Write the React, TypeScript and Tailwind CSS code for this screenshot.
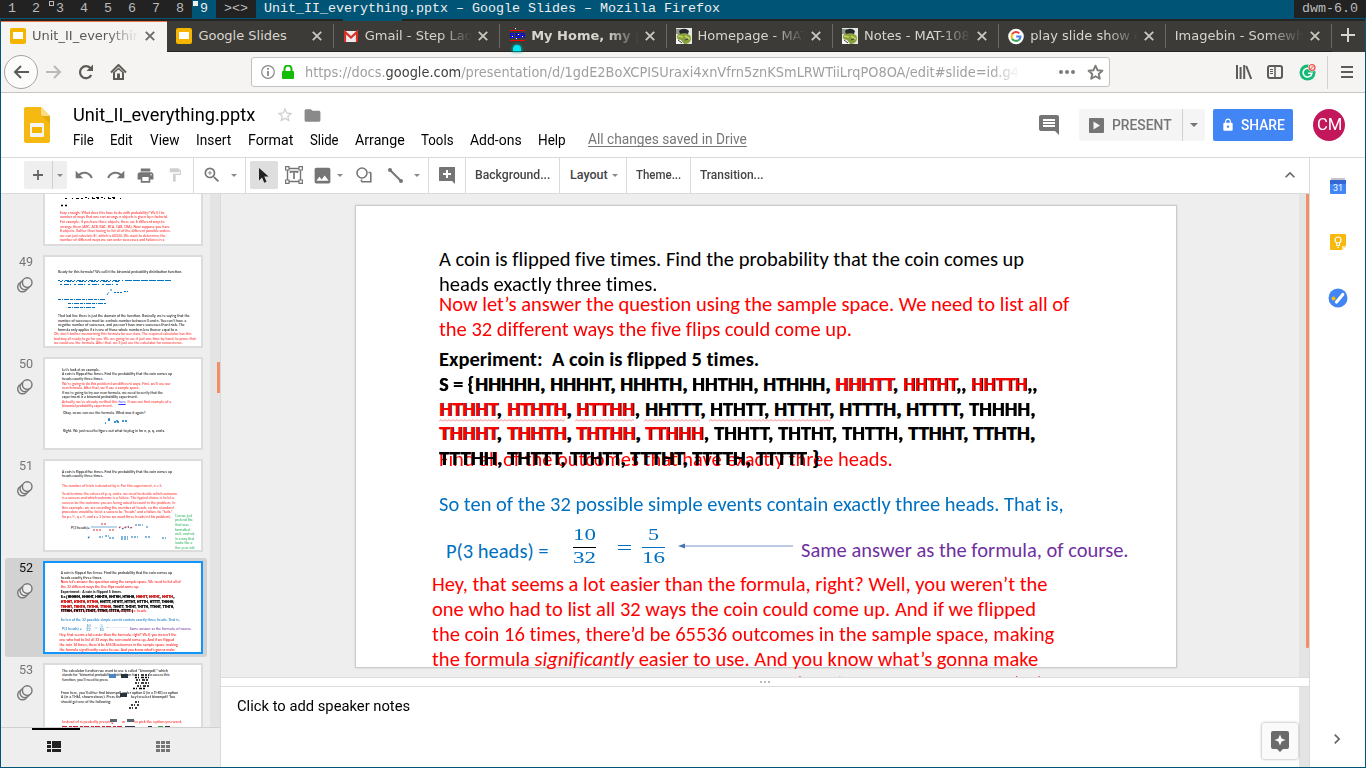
import { useLayoutEffect, useRef, useState, type ReactNode } from "react";
import {
  MdFolder,
  MdFormatPaint,
  MdImage,
  MdInsertComment,
  MdKeyboardArrowUp,
  MdKeyboardArrowRight,
  MdLock,
  MdPrint,
  MdRedo,
  MdStarBorder,
  MdUndo,
  MdZoomIn,
} from "react-icons/md";

type FitProps = { w: number; className?: string; children: ReactNode };

// One line of text, stretched or squeezed to an exact advance width.
function Fit({ w, className = "", children }: FitProps) {
  const ref = useRef<HTMLSpanElement>(null);
  const [scale, setScale] = useState(1);
  useLayoutEffect(() => {
    if (ref.current && ref.current.offsetWidth > 0) setScale(w / ref.current.offsetWidth);
  }, [w]);
  return (
    <span className={`block shrink-0 whitespace-pre ${className}`} style={{ width: w }}>
      <span ref={ref} className="inline-block origin-left align-top" style={{ transform: `scaleX(${scale})` }}>
        {children}
      </span>
    </span>
  );
}

/* ---------- window manager bar ---------- */

const tags = ["1", "2", "3", "4", "5", "6", "7", "8", "9"];

function StatusBar() {
  return (
    <div className="flex h-[18px] bg-[#222222] font-['Liberation_Mono'] text-[13.33px] leading-[17px] text-[#bbbbbb]">
      {tags.map((tag) => (
        <div key={tag} className={`relative w-6 text-center ${tag === "9" ? "bg-[#005577] text-[#eeeeee]" : ""}`}>
          {tag === "3" && <i className="absolute left-px top-px size-[5px] border border-[#bbbbbb]" />}
          {tag === "9" && <i className="absolute left-px top-px size-[5px] bg-[#eeeeee]" />}
          {tag}
        </div>
      ))}
      <div className="w-10 pl-2">{"><>"}</div>
      <div className="flex-1 bg-[#005577] pl-2 text-[#eeeeee]">
        <Fit w={456}>Unit_II_everything.pptx – Google Slides – Mozilla Firefox</Fit>
      </div>
      <div className="w-[72px] pl-2">dwm-6.0</div>
    </div>
  );
}

/* ---------- firefox ---------- */

function SlidesFavicon() {
  return (
    <svg width="16" height="16" viewBox="0 0 16 16">
      <rect width="16" height="16" rx="2" fill="#f4b400" />
      <rect x="3" y="4" width="10" height="7" fill="#fff" />
    </svg>
  );
}

function GmailFavicon() {
  return (
    <svg width="14" height="16" viewBox="0 0 14 16">
      <rect x="0" y="3" width="14" height="11" fill="#eceaea" />
      <path d="M1 14V4l6 5.500 6-5.500v10" fill="none" stroke="#d93025" strokeWidth="2.200" />
    </svg>
  );
}

function HomeFavicon() {
  return (
    <svg width="15" height="16" viewBox="0 0 15 16">
      <path d="M0 2.500h15M0 12.500h15" stroke="#f00" />
      <path d="M0 5.500h4M0 7.500h4M0 9.500h4M5.500 5.500h4M5.500 7.500h4M5.500 9.500h4M11 5.500h3M11 7.500h4" stroke="#00f" strokeWidth="1.200" />
      <path d="M.5 5v3M3.500 7v3M6 5v3M9 7v3M11 5v5M14 5v5" stroke="#00f" />
      <path d="M5 .5h1M2 8.500h1M8 6.500h1M12 8.500h1M6 10.500h1" stroke="#fff" />
    </svg>
  );
}

function GatorFavicon() {
  return (
    <svg width="16" height="16" viewBox="0 0 16 16">
      <rect width="16" height="16" fill="#e6ebe2" />
      <path d="M0 1h5v5H0z" fill="#8b9a8c" />
      <path d="M1 9c0-4 4-5 7-4s7 1 7 5-3 6-7 6-3-3-6-4z" fill="#8aa03c" />
      <path d="M3 3c3-3 7-3 10 0l-1 3c-3-1-6-1-8 0z" fill="#25282c" />
      <path d="M2 8l5 1M9 8l5 3" stroke="#c4d264" strokeWidth="1.500" />
      <path d="M0 11l5 1 3 4H0z" fill="#f7f7f7" />
      <path d="M2 12l4 3M9 12l3-1" stroke="#39444a" />
    </svg>
  );
}

function GoogleFavicon() {
  return (
    <svg width="17" height="17" viewBox="0 0 17 17">
      <circle cx="8.500" cy="8.500" r="8.300" fill="#fff" />
      <g fill="none" strokeWidth="2.200">
        <path d="M12 5.200A4.700 4.700 0 0 0 4.400 6.200" stroke="#ea4335" />
        <path d="M4.400 6.200a4.700 4.700 0 0 0 0 4.600" stroke="#fbbc05" />
        <path d="M4.400 10.800a4.700 4.700 0 0 0 7.300 1.100" stroke="#34a853" />
        <path d="M11.700 11.900a4.700 4.700 0 0 0 1.500-3.400H8.700" stroke="#4285f4" />
      </g>
    </svg>
  );
}

type Tab = { title: string; icon?: ReactNode; bold?: boolean; active?: boolean };

const tabs: Tab[] = [
  { title: "Unit_II_everything.pptx", icon: <SlidesFavicon />, active: true },
  { title: "Google Slides", icon: <SlidesFavicon /> },
  { title: "Gmail - Step Ladder", icon: <GmailFavicon /> },
  { title: "My Home, my page", icon: <HomeFavicon />, bold: true },
  { title: "Homepage - MAT-108", icon: <GatorFavicon /> },
  { title: "Notes - MAT-108-01", icon: <GatorFavicon /> },
  { title: "play slide show on", icon: <GoogleFavicon /> },
  { title: "Imagebin - Somewhere" },
];

function CloseIcon({ color }: { color: string }) {
  return (
    <svg width="10" height="10" viewBox="0 0 10 10" className="shrink-0">
      <path d="M.8.800l8.400 8.400M9.200.800L.8 9.200" stroke={color} strokeWidth="1.900" />
    </svg>
  );
}

function TabStrip() {
  return (
    <div className="relative flex h-[33px] border-t-2 border-[#242422] bg-[#3c3b37]">
      <i className="absolute -top-0.5 left-[342px] h-0.5 w-[59px] bg-[#005577]" />
      {tabs.map((tab, index) => (
        <div
          key={tab.title}
          className={`relative flex w-[166.400px] shrink-0 items-center pl-[9px] ${
            tab.active ? "border-t border-[#e9764b] bg-[#f5f4f2] pb-0.5 text-[#5a5955]" : "border-b border-[#242422] text-[#d8d5ce]"
          }`}
        >
          {tab.icon && <span className="mr-1.5 flex w-4 shrink-0 justify-center">{tab.icon}</span>}
          <span
            className={`flex-1 overflow-hidden whitespace-nowrap font-['DejaVu_Sans'] text-[13px] leading-6 ${
              tab.title === "Google Slides" ? "" : "[mask-image:linear-gradient(to_right,black_70%,transparent_99%)]"
            } ${tab.bold ? "font-bold" : ""}`}
          >
            {tab.title}
          </span>
          <span className="mr-3 flex w-[15px] justify-end">
            <CloseIcon color={tab.active ? "#6c6b68" : "#c9c6c0"} />
          </span>
          {index > 0 && <i className="absolute right-0 top-[3px] h-6 w-px bg-[#6b6965]" />}
          {tab.bold && <i className="absolute bottom-0 left-[13px] h-[6px] w-2 rounded-t-full bg-[#00e8f0] shadow-[0_0_3px_1px_#08979c]" />}
        </div>
      ))}
      <svg width="14" height="14" viewBox="0 0 14 14" className="ml-[9px] mt-[7px]">
        <path d="M7 0v14M0 7h14" stroke="#d8d5ce" strokeWidth="2" />
      </svg>
    </div>
  );
}

function NavBar() {
  return (
    <div className="flex h-[41px] items-center border-b border-[#c8c5c1] bg-[#f5f4f2] pl-[3px]">
      <span className="grid size-[34px] place-items-center rounded-full border border-[#a5a4a1] bg-[#fcfcfb]">
        <svg width="16" height="14" viewBox="0 0 16 14" fill="none" stroke="#5c5b57" strokeWidth="2">
          <path d="M16 7H2M8 1L2 7l6 6" />
        </svg>
      </span>
      <svg width="16" height="14" viewBox="0 0 16 14" fill="none" stroke="#bbb9b6" strokeWidth="2" className="ml-2">
        <path d="M0 7h14M8 1l6 6-6 6" />
      </svg>
      <svg width="16" height="16" viewBox="0 0 16 16" fill="none" stroke="#5c5b57" strokeWidth="2.200" className="ml-4">
        <path d="M12.500 4.200A6 6 0 1 0 13.300 11" />
        <path d="M15 .5v6.500H8.500z" fill="#5c5b57" stroke="none" />
      </svg>
      <svg width="17" height="16" viewBox="0 0 17 16" className="ml-4">
        <path d="M1 8.500L8.500 1 16 8.500" fill="none" stroke="#5c5b57" strokeWidth="2" />
        <path d="M3 8.500L8.500 3.500 14 8.500V16H3z" fill="#5c5b57" />
        <path d="M5 8.500L8.500 5.500 12 8.500V14H10V9.500H7V14H5z" fill="#f5f4f2" />
      </svg>
      <div className="ml-[124px] flex h-[30px] w-[859px] items-center rounded-[3px] border border-[#c4c2be] bg-white pl-[9px]">
        <svg width="14" height="14" viewBox="0 0 14 14" fill="none" stroke="#8a8986">
          <circle cx="7" cy="7" r="6.300" strokeWidth="1.200" />
          <path d="M7 6v5M7 3v1.800" strokeWidth="1.800" />
        </svg>
        <svg width="12" height="14" viewBox="0 0 12 14" className="ml-[7px]">
          <rect y="6" width="12" height="8" rx="1" fill="#12bc00" />
          <path d="M2.500 7V4a3.500 3.500 0 0 1 7 0v3" fill="none" stroke="#12bc00" strokeWidth="2" />
        </svg>
        <div className="ml-[11px] w-[722px] overflow-hidden pt-px font-['DejaVu_Sans'] text-[13.33px] leading-6 text-[#a09f9d] [mask-image:linear-gradient(to_right,black_95%,transparent_99%)]">
          <Fit w={722}>
            https://docs.<span className="text-[#3f3e3b]">google.com</span>
            /presentation/d/1gdE2BoXCPISUraxi4xnVfrn5znKSmLRWTiiLrqPO8OA/edit#slide=id.g45
          </Fit>
        </div>
        <svg width="16" height="4" viewBox="0 0 16 4" className="ml-8" fill="#7d7c79">
          <circle cx="2" cy="2" r="2" />
          <circle cx="8" cy="2" r="2" />
          <circle cx="14" cy="2" r="2" />
        </svg>
        <svg width="17" height="17" viewBox="0 0 17 17" className="ml-3">
          <path d="M8.500 1.700l2 4.500 4.900.5-3.700 3.300 1.100 4.800-4.300-2.500-4.300 2.500L5.300 10 1.600 6.700l4.900-.5z" fill="none" stroke="#7d7c79" strokeWidth="1.900" strokeLinejoin="round" />
        </svg>
      </div>
      <svg width="16" height="14" viewBox="0 0 16 14" className="ml-[126px]" stroke="#5c5b57" strokeWidth="2">
        <path d="M1 0v14M4.600 2v12M8.200 0v14" />
        <path d="M10.200 1l5 13" />
      </svg>
      <svg width="16" height="14" viewBox="0 0 16 14" className="ml-[15px]" fill="none" stroke="#5c5b57">
        <rect x="1" y="1" width="14" height="12" rx="2" strokeWidth="2" />
        <path d="M8 1v12" strokeWidth="1.500" />
        <path d="M3 4.500h3M3 6.500h3M3 8.500h3" />
      </svg>
      <svg width="18" height="18" viewBox="0 0 18 18" className="ml-4">
        <circle cx="8.500" cy="9.500" r="8" fill="#15ba77" />
        <path d="M11.700 6.500A4.400 4.400 0 1 0 12.900 10.300H9" fill="none" stroke="#fff" strokeWidth="1.600" />
        <circle cx="13" cy="4.500" r="4" fill="#fff" />
        <circle cx="13" cy="4.500" r="3" fill="#fbdcd9" stroke="#ea4f45" strokeWidth="1.200" />
        <path d="M11 6.500l4-4" stroke="#ea4f45" />
      </svg>
      <i className="ml-[10px] h-[33px] w-px bg-[#d3d1cd]" />
      <svg width="12" height="12" viewBox="0 0 12 12" className="ml-[13px]">
        <path d="M0 1h12M0 6h12M0 11h12" stroke="#5c5b57" strokeWidth="2" />
      </svg>
    </div>
  );
}

/* ---------- slides header ---------- */

const menuItems: { label: string; w: number; cell: string }[] = [
  { label: "File", w: 21, cell: "w-[37px]" },
  { label: "Edit", w: 23, cell: "w-[40px]" },
  { label: "View", w: 29, cell: "w-[46px]" },
  { label: "Insert", w: 35, cell: "w-[52px]" },
  { label: "Format", w: 45, cell: "w-[62px]" },
  { label: "Slide", w: 29, cell: "w-[45px]" },
  { label: "Arrange", w: 50, cell: "w-[66px]" },
  { label: "Tools", w: 33, cell: "w-[49px]" },
  { label: "Add-ons", w: 52, cell: "w-[68px]" },
  { label: "Help", w: 28, cell: "w-[50px]" },
];

function Header() {
  return (
    <div className="flex h-[65px] border-b border-[#dadada] bg-white">
      <svg width="26" height="36" viewBox="0 0 26 36" className="ml-[23px] mt-[14px] shrink-0">
        <path d="M2 0h15l9 9v25a2 2 0 0 1-2 2H2a2 2 0 0 1-2-2V2a2 2 0 0 1 2-2z" fill="#f5b912" />
        <path d="M17 0l9 9h-7a2 2 0 0 1-2-2z" fill="#fadc87" />
        <path d="M18 9h8v8z" fill="#dca30c" opacity=".6" />
        <rect x="6" y="16" width="14" height="14" rx="1" fill="#f4f4f4" />
        <rect x="8" y="20" width="10" height="6" fill="#f4b400" />
      </svg>
      <div className="ml-[23px] flex-1 font-['Roboto'] text-black">
        <div className="mt-[9px] flex h-[26px] items-center">
          <Fit w={182} className="text-[18px] leading-[26px]">Unit_II_everything.pptx</Fit>
          <MdStarBorder className="ml-[21px] size-[18px] text-[#cccccc]" />
          <MdFolder className="ml-[9px] size-[19px] text-[#8a8a8a]" />
        </div>
        <div className="mt-px flex h-6 items-center text-[14.500px] leading-6">
          {menuItems.map((item) => (
            <div key={item.label} className={item.cell}>
              <Fit w={item.w}>{item.label}</Fit>
            </div>
          ))}
          <Fit w={159} className="-mt-0.5 text-[#777777]">
            <span className="underline decoration-1 underline-offset-[2px] [text-decoration-skip-ink:none]">All changes saved in Drive</span>
          </Fit>
        </div>
      </div>
      <MdInsertComment className="mt-[20px] size-6 text-[#757575]" />
      <div className="ml-[18px] mt-4 flex h-8 w-[126px] items-center rounded-[2px] bg-[#f5f5f5] font-['Roboto'] text-[#757575]">
        <svg width="15" height="15" viewBox="0 0 15 15" className="ml-[10px]">
          <rect width="15" height="15" rx="1" fill="#757575" />
          <path d="M4.500 3.500v8L11 7.500z" fill="#f5f5f5" />
        </svg>
        <Fit w={60} className="ml-2 text-[15px] font-medium leading-8">PRESENT</Fit>
        <i className="ml-[10px] h-8 w-px bg-[#d0d0d0]" />
        <span className="ml-[7px] border-x-4 border-t-4 border-transparent border-t-[#757575]" />
      </div>
      <div className="ml-2 mt-4 flex h-8 w-20 items-center rounded-[2px] bg-[#4285f4] font-['Roboto'] text-white">
        <MdLock className="ml-2 size-[14px]" />
        <Fit w={44} className="ml-[6px] text-[15px] font-medium leading-8">SHARE</Fit>
      </div>
      <div className="ml-5 mr-5 mt-4 flex size-8 items-center justify-center rounded-full bg-[#c2185b] font-['Roboto'] text-white">
        <Fit w={25} className="text-[16px] leading-8">CM</Fit>
      </div>
    </div>
  );
}

function Sep() {
  return <i className="h-full w-px shrink-0 bg-[#dadada]" />;
}

function Caret() {
  return <span className="block border-x-[3px] border-t-[3.500px] border-transparent border-t-[#8a8a8a]" />;
}

function Cell({ className, children }: { className: string; children?: ReactNode }) {
  return <div className={`grid shrink-0 place-items-center ${className}`}>{children}</div>;
}

function Toolbar() {
  return (
    <div className="flex h-9 items-center border-b border-[#dadada] bg-white pl-[23px] font-['Roboto'] text-[12.500px] font-medium leading-[26px] text-[#444444]">
      <Cell className="-mt-px h-7 w-[28px] rounded-l-[2px] bg-[#efefef]">
        <svg width="10" height="10" viewBox="0 0 10 10"><path d="M5 0v10M0 5h10" stroke="#666" strokeWidth="1.800" /></svg>
      </Cell>
      <Cell className="-mt-px h-7 w-[15px] rounded-r-[2px] border-l border-[#d0d0d0] bg-[#efefef]"><Caret /></Cell>
      <Cell className="-mt-0.5 w-[34px]"><MdUndo className="size-5 text-[#757575]" /></Cell>
      <Cell className="-mt-0.5 w-[29px]"><MdRedo className="size-5 text-[#757575]" /></Cell>
      <Cell className="-mt-px w-[30px]"><MdPrint className="size-[19px] text-[#757575]" /></Cell>
      <Cell className="-mt-px w-[30px]"><MdFormatPaint className="size-4 text-[#cfcfcf]" /></Cell>
      <Cell className="w-[3px]" />
      <Sep />
      <Cell className="-mt-0.5 w-9"><MdZoomIn className="size-[20px] text-[#757575]" /></Cell>
      <Cell className="-mt-px w-[7px]"><Caret /></Cell>
      <Cell className="w-2" />
      <Sep />
      <Cell className="-mt-px ml-1 h-7 w-7 rounded-[2px] bg-[#dedede]">
        <svg width="10" height="15" viewBox="0 0 10 15"><path d="M0 0v12.500l3-3 2.300 5.300 2.200-1L5.300 8.600H9.600z" fill="#222" /></svg>
      </Cell>
      <Cell className="-mt-px w-8">
        <svg width="18" height="18" viewBox="0 0 18 18" fill="none" stroke="#757575">
          <path d="M2.500 2.500h13v13h-13z" strokeWidth="1.400" />
          <path d="M5.500 7V5.700h7V7M9 5.700v7.300" strokeWidth="1.700" />
          <g fill="#fff" strokeWidth="1.200">
            <path d="M.6.600h3.400v3.400H.6zM14 .6h3.400v3.400H14zM.6 14h3.400v3.400H.6zM14 14h3.400v3.400H14z" />
          </g>
        </svg>
      </Cell>
      <Cell className="-mt-px w-6"><MdImage className="size-[21px] text-[#757575]" /></Cell>
      <Cell className="-mt-px w-3"><Caret /></Cell>
      <Cell className="-mt-px w-9">
        <svg width="16" height="16" viewBox="0 0 16 16" fill="none" stroke="#757575" strokeWidth="1.600">
          <circle cx="6" cy="6" r="5" />
          <path d="M14.800 5.500v9.300H5.500M12.500 5.500h2.300M5.500 12.500v2.300" />
        </svg>
      </Cell>
      <Cell className="-mt-px w-[26px]">
        <svg width="15" height="15" viewBox="0 0 15 15">
          <path d="M2 2l11 11" stroke="#757575" strokeWidth="2" />
          <circle cx="2" cy="2" r="2" fill="#757575" />
          <circle cx="13" cy="13" r="2" fill="#757575" />
        </svg>
      </Cell>
      <Cell className="-mt-px w-[17px]"><Caret /></Cell>
      <Cell className="w-[3px]" />
      <Sep />
      <Cell className="w-9">
        <svg width="16" height="17" viewBox="0 0 16 17">
          <path d="M1 0h15v17l-3-3H0V1a1 1 0 0 1 1-1z" fill="#757575" />
          <path d="M8 3v8M4 7h8" stroke="#fff" strokeWidth="2" />
        </svg>
      </Cell>
      <Sep />
      <Fit w={75} className="mx-[9px] pb-0.5">Background...</Fit>
      <Sep />
      <Fit w={38} className="ml-[10px] mr-[4px] pb-0.5">Layout</Fit>
      <Caret />
      <i className="w-2" />
      <Sep />
      <Fit w={45} className="mx-[9px] pb-0.5">Theme...</Fit>
      <Sep />
      <Fit w={64} className="ml-[9px] pb-0.5">Transition...</Fit>
      <MdKeyboardArrowUp className="-mt-0.5 ml-auto mr-[9px] size-5 text-[#666666]" />
    </div>
  );
}

/* ---------- slide ---------- */

type Token = { text: string; pitch: number; red?: boolean };

const outcomeRows: Token[][] = [
  [
    { text: "S = {", pitch: 36 },
    { text: "HHHHH,", pitch: 75 },
    { text: "HHHHT,", pitch: 70 },
    { text: "HHHTH,", pitch: 72 },
    { text: "HHTHH,", pitch: 71 },
    { text: "HTHHH,", pitch: 72 },
    { text: "HHHTT,", pitch: 68, red: true },
    { text: "HHTHT,,", pitch: 68, red: true },
    { text: "HHTTH,,", pitch: 71, red: true },
  ],
  [
    { text: "HTHHT,", pitch: 68, red: true },
    { text: "HTHTH,", pitch: 69, red: true },
    { text: "HTTHH,", pitch: 69, red: true },
    { text: "HHTTT,", pitch: 65 },
    { text: "HTHTT,", pitch: 64 },
    { text: "HTTHT,", pitch: 65 },
    { text: "HTTTH,", pitch: 67 },
    { text: "HTTTT,", pitch: 63 },
    { text: "THHHH,", pitch: 71 },
  ],
  [
    { text: "THHHT,", pitch: 68, red: true },
    { text: "THHTH,", pitch: 69, red: true },
    { text: "THTHH,", pitch: 69, red: true },
    { text: "TTHHH,", pitch: 69, red: true },
    { text: "THHTT,", pitch: 64 },
    { text: "THTHT,", pitch: 64 },
    { text: "THTTH,", pitch: 66 },
    { text: "TTHHT,", pitch: 65 },
    { text: "TTHTH,", pitch: 67 },
  ],
  [
    { text: "TTTHH,", pitch: 68 },
    { text: "THTTT,", pitch: 63 },
    { text: "TTHTT,", pitch: 60 },
    { text: "TTTHT,", pitch: 62 },
    { text: "TTTTH,", pitch: 64 },
    { text: "TTTTT", pitch: 56 },
    { text: "}", pitch: 12 },
  ],
];

function OutcomeRow({ row }: { row: Token[] }) {
  return (
    <div className="flex">
      {row.map((token) => {
        const letters = token.text.replace(/,/g, "");
        const gap = token.text.startsWith("S") ? 1 : 5;
        return (
          <div key={token.text} className="shrink-0" style={{ width: token.pitch }}>
            <Fit w={token.pitch - gap}>
              <span className={token.red ? "text-[#ff0000] [text-shadow:1px_0_0_#400]" : "[text-shadow:0.500px_0_0_#000]"}>{letters}</span>
              <span className="[text-shadow:0.800px_0_0_#000]">{token.text.slice(letters.length)}</span>
            </Fit>
          </div>
        );
      })}
    </div>
  );
}

function Squiggle({ className }: { className: string }) {
  return (
    <svg height="3" className={`absolute top-[213px] ${className}`}>
      <defs>
        <pattern id="squiggle" width="4" height="3" patternUnits="userSpaceOnUse">
          <path d="M0 2.500l2-2 2 2" fill="none" stroke="#ff6060" strokeWidth=".8" />
        </pattern>
      </defs>
      <rect width="100%" height="3" fill="url(#squiggle)" />
    </svg>
  );
}

function SlideContent() {
  return (
    <div className="relative h-[461px] w-[820px] font-['Carlito','Lato'] text-[20.500px] leading-[25px] text-black [font-variant-ligatures:none]">
      <div className="absolute left-[83px] top-[41px]">
        <Fit w={585}>A coin is flipped five times. Find the probability that the coin comes up</Fit>
        <Fit w={218}>heads exactly three times.</Fit>
      </div>
      <div className="absolute left-[83px] top-[86px] text-[#ff0000]">
        <Fit w={630}>Now let’s answer the question using the sample space. We need to list all of</Fit>
        <Fit w={413}>the 32 different ways the five flips could come up.</Fit>
      </div>
      <Fit w={454} className="absolute left-[83px] top-[240.500px] text-[#ff0000]">
        Find all of the outcomes that have exactly three heads.
      </Fit>
      <div className="absolute left-[83px] top-[141px] font-bold leading-[24.800px]">
        <Fit w={320}>{"Experiment:  A coin is flipped 5 times."}</Fit>
        {outcomeRows.map((row) => (
          <OutcomeRow key={row[0].text} row={row} />
        ))}
      </div>
      <Squiggle className="left-[83px] w-[126px]" />
      <Squiggle className="left-[219px] w-[59px]" />
      <Squiggle className="left-[288px] w-[56px]" />
      <Squiggle className="left-[353px] w-[122px]" />
      <Fit w={625} className="absolute left-[83px] top-[286px] text-[#0070c0]">
        So ten of the 32 possible simple events contain exactly three heads. That is,
      </Fit>
      <Fit w={102} className="absolute left-[90px] top-[333px] text-[#0070c0]">P(3 heads) =</Fit>
      <div className="absolute left-[217px] top-[319px] font-['Liberation_Serif'] text-[16px] leading-[20px] text-[#0070c0]">
        <Fit w={23} className="h-[22.500px] border-b border-black">10</Fit>
        <Fit w={23}>32</Fit>
      </div>
      <i className="absolute left-[262px] top-[339px] h-[5px] w-[13px] border-y border-[#0070c0]" />
      <div className="absolute left-[286px] top-[319px] font-['Liberation_Serif'] text-[16px] leading-[20px] text-[#0070c0]">
        <div className="flex h-[22.500px] w-[23px] justify-center border-b border-[#0070c0]">
          <Fit w={11}>5</Fit>
        </div>
        <Fit w={23}>16</Fit>
      </div>
      <svg width="116" height="6" viewBox="0 0 116 6" className="absolute left-[322px] top-[337px]">
        <path d="M4 3h111" stroke="#a3b8df" strokeWidth="1.600" />
        <path d="M0 3l7-2.500v5z" fill="#4a72b5" />
      </svg>
      <Fit w={328} className="absolute left-[445px] top-[332px] text-[#7030a0]">Same answer as the formula, of course.</Fit>
      <div className="absolute left-[76px] top-[366px] text-[#ff0000]">
        <Fit w={616}>Hey, that seems a lot easier than the formula, right? Well, you weren’t the</Fit>
        <Fit w={604}>one who had to list all 32 ways the coin could come up. And if we flipped</Fit>
        <Fit w={622}>the coin 16 times, there’d be 65536 outcomes in the sample space, making</Fit>
        <Fit w={606}>
          the formula <span className="italic">significantly</span> easier to use. And you know what’s gonna make
        </Fit>
        <Fit w={617}>the probability functions even more awesome? (Didn’t I do this by the TI-83 (84)!</Fit>
      </div>
    </div>
  );
}

/* ---------- filmstrip ---------- */

type Line = [text: string, width: number];

function Lines({ className, lines }: { className: string; lines: Line[] }) {
  return (
    <div className={`absolute font-['Carlito','Lato'] text-[3.900px] leading-[4.600px] ${className}`}>
      {lines.map(([text, width]) => (
        <Fit key={text} w={width}>{text}</Fit>
      ))}
    </div>
  );
}

function Slide48() {
  return (
    <>
      <svg width="156" height="60" className="absolute left-0 top-0" stroke="#000" fill="none">
        <path d="M20 43.500h56M40 42.500h30" strokeDasharray="2 5 1 3 3 2" />
        <path d="M16 50.500h2M20 50.500h2" strokeWidth="1.500" />
      </svg>
      <Lines
        className="left-[15px] top-[55.900px] text-[#ff2020]"
        lines={[
          ["Easy enough. What does this have to do with probability? Well, the", 105],
          ["number of ways that one can arrange n objects is given by n factorial.", 108],
          ["For example, if you have three objects, there are 6 different ways to", 105],
          ["arrange them (ABC, ACB, BAC, BCA, CAB, CBA). Now suppose you have", 110],
          ["8 objects. Rather than having to list all of the different possible orders,", 111],
          ["we can just calculate 8!, which is 40320. We want to determine the", 106],
          ["number of different ways we can order successes and failures in a", 104],
        ]}
      />
    </>
  );
}

function Slide49() {
  return (
    <>
      <Lines className="left-[13px] top-[12.900px]" lines={[["Ready for this formula? We call it the binomial probability distribution function.", 124]]} />
      <svg width="156" height="60" className="absolute left-0 top-0" stroke="#0070c0" fill="none">
        <path d="M13 23.500h70M15 24.500h60" strokeDasharray="2 2 1 2 4 1" />
        <path d="M80 23.500h46" strokeDasharray="7 1" />
        <path d="M15 27.500h58" strokeDasharray="2 2 5 1 1 3" />
        <path d="M62 38l2-3M65 33h3M69 35.500h8M79 34.500h4" strokeDasharray="2 1" />
        <path d="M13 42.500h48M23 46.500h38M23 50.500h28" strokeDasharray="3 1 1 1 5 1" />
      </svg>
      <Lines
        className="left-[13px] top-[57.200px]"
        lines={[
          ["That last line there is just the domain of the function. Basically, we’re saying that the", 132],
          ["number of successes must be a whole number between 0 and n. You can’t have a", 128],
          ["negative number of successes, and you can’t have more successes than trials. The", 127],
          ["formula only applies if x is one of those whole numbers less than or equal to n.", 120],
        ]}
      />
      <Lines
        className="left-[9px] top-[75.200px] text-[#ff2020]"
        lines={[
          ["Oh, don’t bother memorizing this formula for our class. The required calculator has this", 138],
          ["bad boy all ready to go for you. We are going to use it just one time by hand, to prove that", 142],
          ["we could use the formula. After that, we’ll just use the calculator for convenience.", 129],
        ]}
      />
    </>
  );
}

function Slide50() {
  return (
    <>
      <Lines
        className="left-[17px] top-[8.900px]"
        lines={[
          ["Let’s look at an example.", 38],
          ["A coin is flipped five times. Find the probability that the coin comes up", 110],
          ["heads exactly three times.", 41],
        ]}
      />
      <Lines
        className="left-[17px] top-[22.700px] text-[#ff2020]"
        lines={[
          ["We’re going to do this problem two different ways. First, we’ll use our", 109],
          ["new formula. After that, we’ll use a sample space.", 78],
        ]}
      />
      <Lines
        className="left-[17px] top-[31.500px]"
        lines={[
          ["If we’re going to try our new formula, we need to verify that the", 101],
          ["experiment is a binomial probability experiment.", 76],
        ]}
      />
      <div className="absolute left-[17px] top-[40.900px] font-['Carlito','Lato'] text-[3.900px] leading-[4.600px] text-[#ff2020]">
        <Fit w={109}>
          Actually, we’ve already verified this <span className="text-[#3030ff] underline">here</span>. It was our first example of a
        </Fit>
        <Fit w={51}>binomial probability experiment.</Fit>
      </div>
      <Lines className="left-[18px] top-[51.900px]" lines={[["Okay, so we can use the formula. What was it again?", 82]]} />
      <svg width="156" height="70" className="absolute left-0 top-0" stroke="#0070c0" fill="none">
        <path d="M60 64h1M63 61h2M64 59v2M69 63h6M77 62h5M72 61v3" strokeDasharray="2 1" strokeWidth="1.300" />
      </svg>
      <Lines className="left-[18px] top-[69.900px]" lines={[["Right. We just need to figure out what to plug in for n, p, q, and x.", 102]]} />
    </>
  );
}

function Slide51() {
  return (
    <>
      <Lines
        className="left-[17px] top-[8.900px]"
        lines={[
          ["A coin is flipped five times. Find the probability that the coin comes up", 110],
          ["heads exactly three times.", 41],
        ]}
      />
      <Lines className="left-[17px] top-[22.500px] text-[#ff2020]" lines={[["The number of trials is denoted by n. For this experiment, n = 5.", 100]]} />
      <Lines
        className="left-[17px] top-[30.900px] text-[#ff2020]"
        lines={[
          ["To determine the values of p, q, and x, we need to decide which outcome", 115],
          ["is a success and which outcome is a failure. The typical choice is to let a", 112],
          ["success be the outcome you are being asked to count in the problem. In", 113],
          ["this example, we are counting the number of heads, so the standard", 111],
          ["procedure would be to let a success be “heads” and a failure be “tails.”", 110],
          ["So p = ½, q = ½, and x = 3 (since we want three heads in this problem).", 109],
        ]}
      />
      <Lines className="left-[26px] top-[64.900px]" lines={[["P(3 heads)=", 19]]} />
      <svg width="156" height="89" className="absolute left-0 top-0" fill="none" strokeWidth="1.200">
        <path d="M46 66h26" stroke="#8dbce0" />
        <path d="M56 63h6M48 69h8M64 69h5M74 67l2-2M80 67l2-2M85 67l3-1" stroke="#e03030" strokeDasharray="2 1" />
        <path d="M77 68l3-2M83 65l1 3M90 64h4M94 64h4M101 66h2" stroke="#3d6eb8" strokeDasharray="2 1" />
        <path d="M43 77l2-2M54 76h4M60 75h4M64 77h6M76 76h7M76 78h7M86 76h7M100 76h6M117 77h4" stroke="#0070c0" strokeDasharray="2 1" />
      </svg>
      <Lines
        className="left-[130px] top-[52.900px] text-[#21b35b]"
        lines={[
          ["Can we just", 17],
          ["pretend like", 18],
          ["that was", 13],
          ["formatted", 15],
          ["well, and not", 20],
          ["in a way that", 19],
          ["looks like a", 17],
          ["five year old", 19],
        ]}
      />
    </>
  );
}

function Slide53() {
  return (
    <>
      <Lines
        className="left-[17px] top-[3.900px]"
        lines={[
          ["The calculator function we want to use is called “binompdf,” which", 106],
          ["stands for “binomial probability distribution function.” To access this", 108],
          ["function, you’ll need to press", 46],
        ]}
      />
      <Lines
        className="left-[16px] top-[25.900px]"
        lines={[
          ["From here, you’ll either find binompdf under option 0 (in a TI-83) or option", 117],
          ["A (in a TI-84, shown above). Press the           key to select binompdf. You", 114],
          ["should get one of the following:", 50],
        ]}
      />
      <Lines className="left-[17px] top-[54.900px] text-[#ff2020]" lines={[["Instead of repeatedly pressing         or         to pick the option you want,", 120]]} />
      <svg width="156" height="70" className="absolute left-0 top-0">
        <path d="M64 9h7v4h-7z" fill="#4a86c5" />
        <path d="M76 9h7v4h-7zM75 28h7v4h-7z" fill="#26323c" />
        <path d="M90 8h14v16H90z" fill="#fff" />
        <path d="M90 10h14M90 12.500h14M91 15h13M90 18h14M92 21h12M88 23.500h12" stroke="#000" strokeWidth="1.600" strokeDasharray="2 1 1 2 3 1" />
        <path d="M90 37h5M86 40h8M84 43h8" stroke="#000" strokeWidth="1.300" strokeDasharray="2 1 1 2" />
        <path d="M65 54h7v3h-7zM82 54h7v3h-7z" fill="#56666e" />
        <path d="M17 61.500h60" stroke="#d02040" strokeDasharray="5 2 3 1" />
        <path d="M80 61.500h10M103 61.500h4M120 61.500h5" stroke="#33344a" />
        <path d="M113 61.500h5" stroke="#2da44e" />
      </svg>
    </>
  );
}

const thumbs: { number: number; content: ReactNode; selected?: boolean }[] = [
  { number: 48, content: <Slide48 /> },
  { number: 49, content: <Slide49 /> },
  { number: 50, content: <Slide50 /> },
  { number: 51, content: <Slide51 /> },
  { number: 52, content: <div className="origin-top-left scale-[0.19024]"><SlideContent /></div>, selected: true },
  { number: 53, content: <Slide53 /> },
];

function Filmstrip() {
  return (
    <div className="flex w-[220px] shrink-0 flex-col border-r border-[#dadada] bg-[#eeeeee]">
      <div className="flex h-[533px] overflow-hidden">
        <div className="-mt-[44px] w-[209px] shrink-0 pl-1">
          {thumbs.map((thumb) => (
            <div
              key={thumb.number}
              className={`mb-[3px] flex h-[99px] w-[202px] rounded-[3px] pt-[3px] ${thumb.selected ? "bg-[#d2d2d2]" : ""}`}
            >
              <div className="flex w-[38px] shrink-0 flex-col items-center font-['Roboto'] text-[13.500px] leading-[13px] text-[#757575]">
                <Fit w={14} className={`ml-[3px] ${thumb.selected ? "text-[#111111]" : ""}`}>{thumb.number}</Fit>
                <svg width="16" height="16" viewBox="0 0 16 16" fill="#eee" stroke="#757575" strokeWidth="1.400" className="ml-px mt-[9px]">
                  <circle cx="5.500" cy="10" r="4.800" />
                  <circle cx="7.800" cy="7.800" r="4.800" />
                  <circle cx="10.200" cy="5.600" r="4.800" />
                </svg>
              </div>
              <div className={`relative h-[93px] w-40 shrink-0 overflow-hidden border-2 bg-white ${thumb.selected ? "border-[#0f95fb]" : "border-[#dcdcdc]"}`}>
                {thumb.content}
              </div>
            </div>
          ))}
        </div>
        <div className="h-full flex-1 bg-[#e4e4e4] pl-[7px] pt-[168px]">
          <div className="h-[31px] bg-[#f28e69]" />
        </div>
      </div>
      <div className="flex flex-1 items-start border-t border-[#d0d0d0]">
        <div className="ml-[31px] h-full w-12 border-t-2 border-black pl-[15px] pt-[11px]">
          <svg width="14" height="11" viewBox="0 0 14 11" fill="#222">
            <path d="M0 0h4v3H0zM0 4h4v3H0zM0 8h4v3H0zM5 0h9v7H5zM5 8h9v3H5z" />
          </svg>
        </div>
        <svg width="14" height="11" viewBox="0 0 14 11" fill="#757575" className="ml-[76px] mt-[13px]">
          <path d="M0 0h4v3H0zM0 4h4v3H0zM0 8h4v3H0zM5 0h4v3H5zM5 4h4v3H5zM5 8h4v3H5zM10 0h4v3h-4zM10 4h4v3h-4zM10 8h4v3h-4z" />
        </svg>
      </div>
    </div>
  );
}

/* ---------- workspace ---------- */

function Workspace() {
  return (
    <div className="flex min-w-0 flex-1 flex-col">
      <div className="flex h-[483px] shrink-0 overflow-hidden bg-[#eeeeee]">
        <div className="w-[1078px] pl-[134px] pt-[11px]">
          <div className="box-content h-[461px] w-[820px] border border-[#cccccc] bg-white shadow-[0_0_2px_rgba(0,0,0,0.15)]">
            <SlideContent />
          </div>
        </div>
        <div className="h-full flex-1 bg-[#e4e4e4] pl-[7px]">
          <div className="h-[454px] rounded-b-[1px] bg-[#f28e69]" />
        </div>
      </div>
      <div className="flex h-[10px] shrink-0 items-center justify-center gap-[2px] border-y border-[#dddddd] bg-white">
        <i className="size-0.5 bg-[#bbbbbb]" />
        <i className="size-0.5 bg-[#bbbbbb]" />
        <i className="size-0.5 bg-[#bbbbbb]" />
      </div>
      <div className="flex flex-1 bg-white">
        <div className="relative w-[1078px] pl-4 pt-[9px] font-['Roboto'] text-[14.500px] leading-[22px] text-black">
          <Fit w={173}>Click to add speaker notes</Fit>
          <div className="absolute bottom-[8px] right-px grid size-9 place-items-center rounded-[2px] bg-[#fafafa] shadow-[0_0_3px_rgba(0,0,0,0.4)]">
            <svg width="18" height="21" viewBox="0 0 18 21">
              <path d="M2 0h14a2 2 0 0 1 2 2v14a2 2 0 0 1-2 2h-4l-3 3-3-3H2a2 2 0 0 1-2-2V2a2 2 0 0 1 2-2z" fill="#6b6b6b" />
              <path d="M9 3.500l1.600 3.900L14.500 9l-3.900 1.600L9 14.500l-1.600-3.900L3.500 9l3.900-1.600z" fill="#fff" />
            </svg>
          </div>
        </div>
        <div className="flex-1 bg-[#e4e4e4]" />
      </div>
    </div>
  );
}

function SidePanel() {
  return (
    <div className="flex w-[56px] shrink-0 flex-col items-center border-l border-[#dadada] bg-white pl-px pt-5">
      <svg width="16" height="16" viewBox="0 0 16 16">
        <rect x="1" width="14" height="4" rx="1" fill="#c4c4c8" />
        <rect y="2" width="16" height="14" rx="1" fill="#4285f4" />
        <rect y="2" width="16" height="4" fill="#3367d6" />
        <text x="8" y="12.700" textAnchor="middle" fill="#fff" className="font-['Roboto'] text-[9px]">31</text>
      </svg>
      <svg width="16" height="16" viewBox="0 0 16 16" className="mt-10">
        <path d="M1 0h14a1 1 0 0 1 1 1v11l-4 4H1a1 1 0 0 1-1-1V1a1 1 0 0 1 1-1z" fill="#f7b90d" />
        <path d="M12 16v-4h4z" fill="#fde9a9" />
        <circle cx="8" cy="6" r="3" fill="none" stroke="#fff" strokeWidth="1.200" />
        <path d="M6.500 9v2.500h3V9M7 13.200h2" fill="none" stroke="#fff" />
      </svg>
      <svg width="20" height="20" viewBox="0 0 20 20" className="mt-[38px]">
        <circle cx="10" cy="10" r="9.500" fill="#4285f4" />
        <circle cx="5.500" cy="10.500" r="2" fill="#fbbc04" />
        <path d="M8.500 14l6.300-7.500" stroke="#fff" strokeWidth="3.200" strokeLinecap="round" />
      </svg>
      <MdKeyboardArrowRight className="mb-[18px] mr-0.5 mt-auto size-5 text-[#666666]" />
    </div>
  );
}

export default function App() {
  return (
    <div className="flex h-[768px] w-[1366px] flex-col overflow-hidden bg-[#005577]">
      <StatusBar />
      <div className="flex min-h-0 flex-1 flex-col border border-[#005577]">
        <TabStrip />
        <NavBar />
        <Header />
        <div className="flex min-h-0 flex-1">
          <div className="flex w-[1308px] flex-col">
            <Toolbar />
            <div className="flex min-h-0 flex-1">
              <Filmstrip />
              <Workspace />
            </div>
          </div>
          <SidePanel />
        </div>
      </div>
    </div>
  );
}
